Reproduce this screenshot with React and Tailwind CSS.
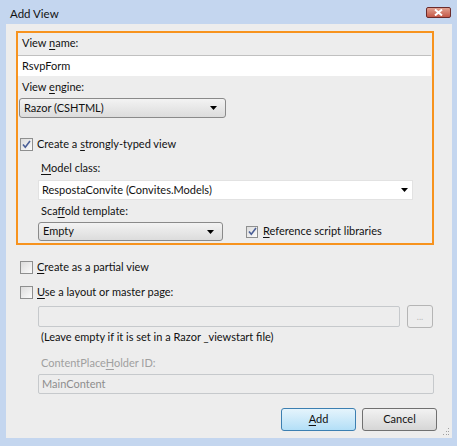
import React from "react";

const U = ({ children }) => <span className="underline underline-offset-2">{children}</span>;

const Arrow = () => (
  <svg width="7" height="4" viewBox="0 0 7 4">
    <path d="M0 0h7L3.5 4z" fill="#000" />
  </svg>
);

const CheckBox = ({ checked, size = "w-[13px] h-[13px]" }) => (
  <div
    className={`${size} border border-[#8e8f8f] bg-gradient-to-br from-[#dcdcdc] to-[#fbfbfb] flex items-center justify-center shrink-0`}
  >
    {checked && (
      <svg width="9" height="9" viewBox="0 0 9 9">
        <path d="M1 4.5l2.3 2.8L8 1" fill="none" stroke="#4a5f97" strokeWidth="1.6" />
      </svg>
    )}
  </div>
);

const Select = ({ value, width }) => (
  <div
    className={`${width} h-full rounded-[3px] border border-[#8a8a8a] bg-gradient-to-b from-[#f3f3f3] to-[#dcdcdc] flex items-center justify-between pl-[4px] pr-[8px]`}
  >
    <span>{value}</span>
    <Arrow />
  </div>
);

const Row = ({ className = "", children }) => (
  <div className={`flex items-center ${className}`}>{children}</div>
);

const App = () => {
  return (
    <div
      className="w-[457px] h-[446px] bg-[#c4d6ef] flex flex-col text-[11px] text-[#111] overflow-hidden"
      style={{ fontFamily: "Lato, 'Noto Sans', sans-serif" }}
    >
      {/* title bar */}
      <div className="h-[24px] flex items-start justify-between pl-[10px] pr-[6px]">
        <span className="mt-[6px] leading-[16px] text-[11.5px]">Add View</span>
        <div className="mt-[7px] w-[25px] h-[11px] rounded-[2px] border border-[#6b2b2b] bg-gradient-to-b from-[#e1a090] to-[#c45848] flex items-center justify-center">
          <svg width="9" height="7" viewBox="0 0 9 7">
            <path d="M1 0.5l7 6M8 0.5l-7 6" stroke="#fff" strokeWidth="2" />
          </svg>
        </div>
      </div>

      {/* content */}
      <div className="relative flex-1 ml-[6px] mr-[5px] mb-[8px] bg-[#ededed] pt-[7px] pl-[10px] flex flex-col">
        <div className="w-[418px] h-[214px] border-2 border-[#f7931e] flex flex-col">
          <Row className="h-[20px] pl-[4px]">
            <span>
              View <U>n</U>ame:
            </span>
          </Row>
          <Row className="h-[21px] mt-[2px] mr-[1px] bg-white border-t border-[#c0c0c0] pl-[4px]">
            RsvpForm
          </Row>
          <Row className="h-[22px] pl-[4px]">
            <span>
              View <U>e</U>ngine:
            </span>
          </Row>
          <div className="h-[20px] ml-[1px]">
            <Select value="Razor (CSHTML)" width="w-[207px]" />
          </div>
          <Row className="h-[20px] mt-[16px] pl-[2px] gap-[4px]">
            <CheckBox checked />
            <span>
              Create a <U>s</U>trongly-typed view
            </span>
          </Row>
          <div className="pl-[20px] flex flex-col">
            <Row className="h-[20px] mt-[4px] pl-[3px]">
              <span>
                <U>M</U>odel class:
              </span>
            </Row>
            <Row className="h-[20px] mt-[2px] w-[375px] bg-white border border-[#e2e2e2] justify-between pl-[3px] pr-[4px]">
              <span>RespostaConvite (Convites.Models)</span>
              <Arrow />
            </Row>
            <Row className="h-[20px] mt-[1px] pl-[3px]">
              <span>
                Sca<U>f</U>fold template:
              </span>
            </Row>
            <Row className="h-[19px] mt-[1px]">
              <Select value="Empty" width="w-[185px]" />
              <CheckBox checked size="w-[12px] h-[12px] ml-[23px]" />
              <span className="ml-[5px]">
                <U>R</U>eference script libraries
              </span>
            </Row>
          </div>
        </div>

        <Row className="h-[20px] mt-[12px] pl-[4px] gap-[4px]">
          <CheckBox />
          <span>
            <U>C</U>reate as a partial view
          </span>
        </Row>
        <Row className="h-[20px] mt-[5px] pl-[4px] gap-[4px]">
          <CheckBox />
          <span>
            <U>U</U>se a layout or master page:
          </span>
        </Row>
        <Row className="h-[23px] mt-[3px] pl-[22px]">
          <div className="w-[362px] h-[21px] rounded-[2px] border border-[#c6c9cc]" />
          <div className="ml-[7px] w-[26px] h-[23px] rounded-[3px] border border-[#b5b5b5] flex items-center justify-center text-[#b9b9b9] text-[9px]">
            ...
          </div>
        </Row>
        <Row className="h-[18px] pl-[25px]">
          <span>(Leave empty if it is set in a Razor _viewstart file)</span>
        </Row>
        <Row className="h-[20px] mt-[7px] pl-[25px] text-[#a0a0a0]">
          <span>
            ContentPlace<U>H</U>older ID:
          </span>
        </Row>
        <Row className="h-[20px] mt-[1px] ml-[22px] w-[396px] rounded-[2px] border border-[#c6c9cc] pl-[3px] text-[#8d8d8d]">
          MainContent
        </Row>
        <div className="h-[23px] mt-[14px] pl-[265px] flex gap-[6px]">
          <div className="w-[75px] h-full rounded-[3px] border border-[#3c7fb1] bg-gradient-to-b from-[#e5f4fc] to-[#b3dff7] flex items-center justify-center">
            <span>
              <U>A</U>dd
            </span>
          </div>
          <div className="w-[75px] h-full rounded-[3px] border border-[#707070] bg-gradient-to-b from-[#f2f2f2] to-[#d6d6d6] flex items-center justify-center">
            Cancel
          </div>
        </div>
        {/* size grip */}
        <svg className="absolute right-[2px] bottom-[2px]" width="8" height="8" viewBox="0 0 8 8">
          <rect x="6" y="0" width="1" height="1" fill="#a0a0a0" />
          <rect x="4" y="3" width="1" height="1" fill="#a0a0a0" />
          <rect x="6" y="3" width="1" height="1" fill="#a0a0a0" />
          <rect x="1" y="6" width="1" height="1" fill="#a0a0a0" />
          <rect x="4" y="6" width="1" height="1" fill="#a0a0a0" />
          <rect x="6" y="6" width="1" height="1" fill="#a0a0a0" />
        </svg>
      </div>
    </div>
  );
};

export default App;
